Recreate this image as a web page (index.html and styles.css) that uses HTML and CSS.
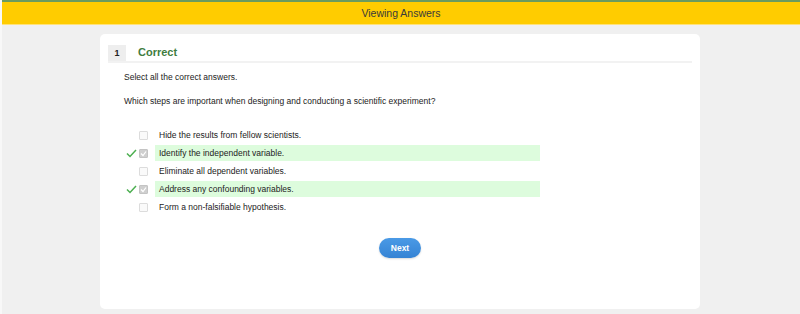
FILE: index.html
```html
<!DOCTYPE html>
<html lang="en">
<head>
  <meta charset="UTF-8" />
  <title>Viewing Answers</title>
  <link rel="stylesheet" href="styles.css">
</head>
<body>
  <div class="topbar">Viewing Answers</div>

  <div class="page">
    <div class="card">
      <div class="q-header">
        <span class="q-num">1</span>
        <span class="q-status">Correct</span>
      </div>

      <p class="q-instr">Select all the correct answers.</p>
      <p class="q-text">Which steps are important when designing and conducting a scientific experiment?</p>

      <ul class="options">
        <li class="option">
          <span class="mark"></span>
          <span class="box"></span>
          <span class="label">Hide the results from fellow scientists.</span>
        </li>
        <li class="option right">
          <span class="mark">
            <svg width="11" height="9" viewBox="0 0 11 9"><path d="M1 4.5 L4 7.5 L10 1" fill="none" stroke="#4caf50" stroke-width="1.5"/></svg>
          </span>
          <span class="box checked">
            <svg width="7" height="7" viewBox="0 0 7 7"><path d="M1 3.5 L3 5.5 L6 1.5" fill="none" stroke="#fff" stroke-width="1.2"/></svg>
          </span>
          <span class="label">Identify the independent variable.</span>
        </li>
        <li class="option">
          <span class="mark"></span>
          <span class="box"></span>
          <span class="label">Eliminate all dependent variables.</span>
        </li>
        <li class="option right">
          <span class="mark">
            <svg width="11" height="9" viewBox="0 0 11 9"><path d="M1 4.5 L4 7.5 L10 1" fill="none" stroke="#4caf50" stroke-width="1.5"/></svg>
          </span>
          <span class="box checked">
            <svg width="7" height="7" viewBox="0 0 7 7"><path d="M1 3.5 L3 5.5 L6 1.5" fill="none" stroke="#fff" stroke-width="1.2"/></svg>
          </span>
          <span class="label">Address any confounding variables.</span>
        </li>
        <li class="option">
          <span class="mark"></span>
          <span class="box"></span>
          <span class="label">Form a non-falsifiable hypothesis.</span>
        </li>
      </ul>

      <div class="actions">
        <button class="next-btn">Next</button>
      </div>
    </div>
  </div>
</body>
</html>
```

FILE: styles.css
```css
body {
  margin: 0;
  font-family: 'Liberation Sans', Arial, sans-serif;
  background-color: #f0f0f0;
  color: #222;
  height: 314px;
  overflow: hidden;
  border-left: 2px solid #f8f8f8;
  box-sizing: border-box;
}

.topbar {
  border-top: 2px solid #6b9b5e;
  border-bottom: 1px solid #ffe27a;
  background-color: #ffcc00;
  height: 22px;
  line-height: 22px;
  text-align: center;
  font-size: 10.5px;
  color: #3a3a3a;
}

.page {
  padding-top: 9px;
}

.card {
  width: 600px;
  height: 275px;
  margin: 0 auto;
  background-color: #fff;
  border-radius: 5px;
  box-sizing: border-box;
  padding: 11px 8px 0 8px;
  position: relative;
  left: -1px;
}

.q-header {
  display: flex;
  align-items: center;
  height: 16px;
  border-bottom: 2px solid #f2f2f2;
}

.q-num {
  width: 18px;
  height: 16px;
  line-height: 16px;
  background-color: #eeeeee;
  text-align: center;
  font-size: 9px;
  font-weight: bold;
  color: #222;
}

.q-status {
  margin-left: 12px;
  font-size: 11px;
  font-weight: bold;
  color: #3f7d3f;
  position: relative;
  top: -1px;
}

.q-instr,
.q-text {
  margin: 7px 0 0 16px;
  font-size: 8.5px;
  line-height: 14px;
  color: #222;
}

.q-text {
  margin-top: 10px;
}

.options {
  list-style: none;
  margin: 19px 0 0 0;
  padding: 0 0 0 16px;
  display: flex;
  flex-direction: column;
  gap: 2px;
}

.option {
  display: flex;
  align-items: center;
  height: 16px;
}

.mark {
  width: 14px;
  display: flex;
  justify-content: center;
  margin-right: 1px;
}

.box {
  width: 7px;
  height: 7px;
  border: 1px solid #dcdcdc;
  border-radius: 1px;
  background-color: #fafafa;
  display: flex;
  align-items: center;
  justify-content: center;
}

.box.checked {
  background-color: #cfcfcf;
  border-color: #c4c4c4;
}

.label {
  margin-left: 7px;
  width: 381px;
  padding-left: 4px;
  height: 16px;
  line-height: 16px;
  font-size: 8.5px;
  color: #222;
}

.option.right .label {
  background-color: #ddfcdd;
}

.actions {
  display: flex;
  justify-content: center;
  margin-top: 23px;
}

.next-btn {
  width: 42px;
  height: 20px;
  border: none;
  border-radius: 10px;
  background: linear-gradient(#4a9ae6, #3583d4);
  color: #fff;
  font-family: 'Liberation Sans', Arial, sans-serif;
  font-size: 8.5px;
  font-weight: bold;
  padding: 0;
  box-shadow: 0 1px 2px rgba(0, 0, 0, 0.15);
}
```
